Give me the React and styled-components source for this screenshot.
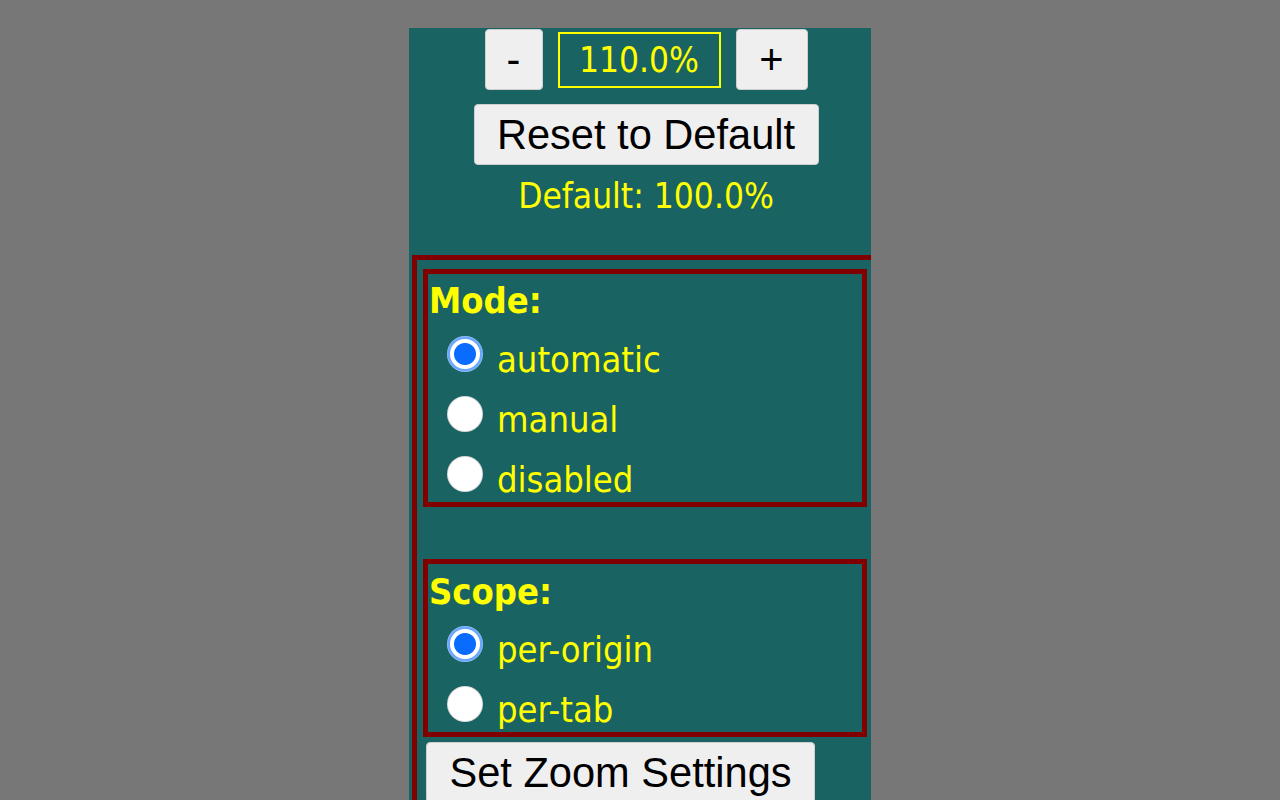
import React from "react";
import styled, { createGlobalStyle } from "styled-components";

const GlobalStyle = createGlobalStyle`
  html, body {
    margin: 0;
    padding: 0;
    background: #777777;
    overflow: hidden;
  }
`;

const App = () => {
  return (
    <>
      <GlobalStyle />
      <Viewport>
        <Panel>
          <Top>
            <ZoomRow>
              <Button $w={58}>-</Button>
              <ZoomValue>110.0%</ZoomValue>
              <Button $w={72}>+</Button>
            </ZoomRow>
            <Button $w={345} $mt={14}>
              Reset to Default
            </Button>
            <DefaultText>Default: 100.0%</DefaultText>
          </Top>

          <Settings>
            <Group $mt={9}>
              <Heading $lh={53}>Mode:</Heading>
              <Option>
                <Radio type="radio" name="mode" defaultChecked />
                automatic
              </Option>
              <Option>
                <Radio type="radio" name="mode" />
                manual
              </Option>
              <Option>
                <Radio type="radio" name="mode" />
                disabled
              </Option>
            </Group>

            <Group $mt={52}>
              <Heading $lh={55}>Scope:</Heading>
              <Option>
                <Radio type="radio" name="scope" defaultChecked />
                per-origin
              </Option>
              <Option>
                <Radio type="radio" name="scope" />
                per-tab
              </Option>
            </Group>

            <Button $w={389} $mt={5} $ml={9}>
              Set Zoom Settings
            </Button>
          </Settings>
        </Panel>
      </Viewport>
    </>
  );
};

export default App;

const Viewport = styled.div`
  width: 462px;
  height: 772px;
  margin: 28px auto 0;
  overflow: hidden;
`;

const Panel = styled.div`
  width: 474px;
  min-height: 800px;
  background: #1a6363;
`;

const Top = styled.div`
  display: flex;
  flex-direction: column;
  align-items: center;
  padding-top: 1px;
`;

const ZoomRow = styled.div`
  display: flex;
  align-items: center;
  gap: 15px;
`;

const Button = styled.button`
  box-sizing: border-box;
  width: ${(p) => p.$w}px;
  height: 61px;
  margin: ${(p) => p.$mt || 0}px 0 0 ${(p) => p.$ml || 0}px;
  padding: 0;
  background: #efefef;
  border: 1px solid #cfcfcf;
  border-radius: 4px;
  color: #000;
  font-family: "Liberation Sans", Arial, sans-serif;
  font-size: 41.6px;
  line-height: 59px;
  text-align: center;
  cursor: pointer;
  white-space: nowrap;
`;

const ZoomValue = styled.div`
  box-sizing: border-box;
  width: 163px;
  height: 56px;
  border: 2px solid #ffff00;
  color: #ffff00;
  font-family: "DejaVu Sans Condensed", "DejaVu Sans", sans-serif;
  font-stretch: condensed;
  font-size: 35px;
  line-height: 52px;
  text-align: center;
`;

const DefaultText = styled.div`
  margin-top: 11px;
  color: #ffff00;
  font-family: "DejaVu Sans Condensed", "DejaVu Sans", sans-serif;
  font-stretch: condensed;
  font-size: 35px;
  line-height: 40px;
`;

const Settings = styled.div`
  box-sizing: border-box;
  width: 471px;
  margin: 39px 0 0 3px;
  border: 5px solid #800000;
  min-height: 600px;
`;

const Group = styled.div`
  box-sizing: border-box;
  width: 444px;
  margin: ${(p) => p.$mt}px 0 0 6px;
  border: 5px solid #800000;
  color: #ffff00;
  font-family: "DejaVu Sans Condensed", "DejaVu Sans", sans-serif;
  font-stretch: condensed;
  font-size: 36px;
`;

const Heading = styled.div`
  height: 56px;
  line-height: ${(p) => p.$lh}px;
  padding-left: 1px;
  font-weight: bold;
`;

const Option = styled.label`
  display: block;
  height: 60px;
  line-height: 60px;
  padding-left: 19px;
  white-space: nowrap;

  &:last-child {
    height: 52px;
  }
`;

const Radio = styled.input`
  appearance: none;
  box-sizing: border-box;
  width: 36px;
  height: 36px;
  margin: 0 14px 0 0;
  vertical-align: baseline;
  border-radius: 50%;
  background: radial-gradient(circle, #ffffff 0 16.5px, #d8d8d8 17.5px 18px);

  &:checked {
    background: radial-gradient(
      circle,
      #0a6cff 0 10.5px,
      #ffffff 11.5px 14.5px,
      #6aa8ff 15.5px 17px,
      #a9ccff 18px
    );
  }
`;
